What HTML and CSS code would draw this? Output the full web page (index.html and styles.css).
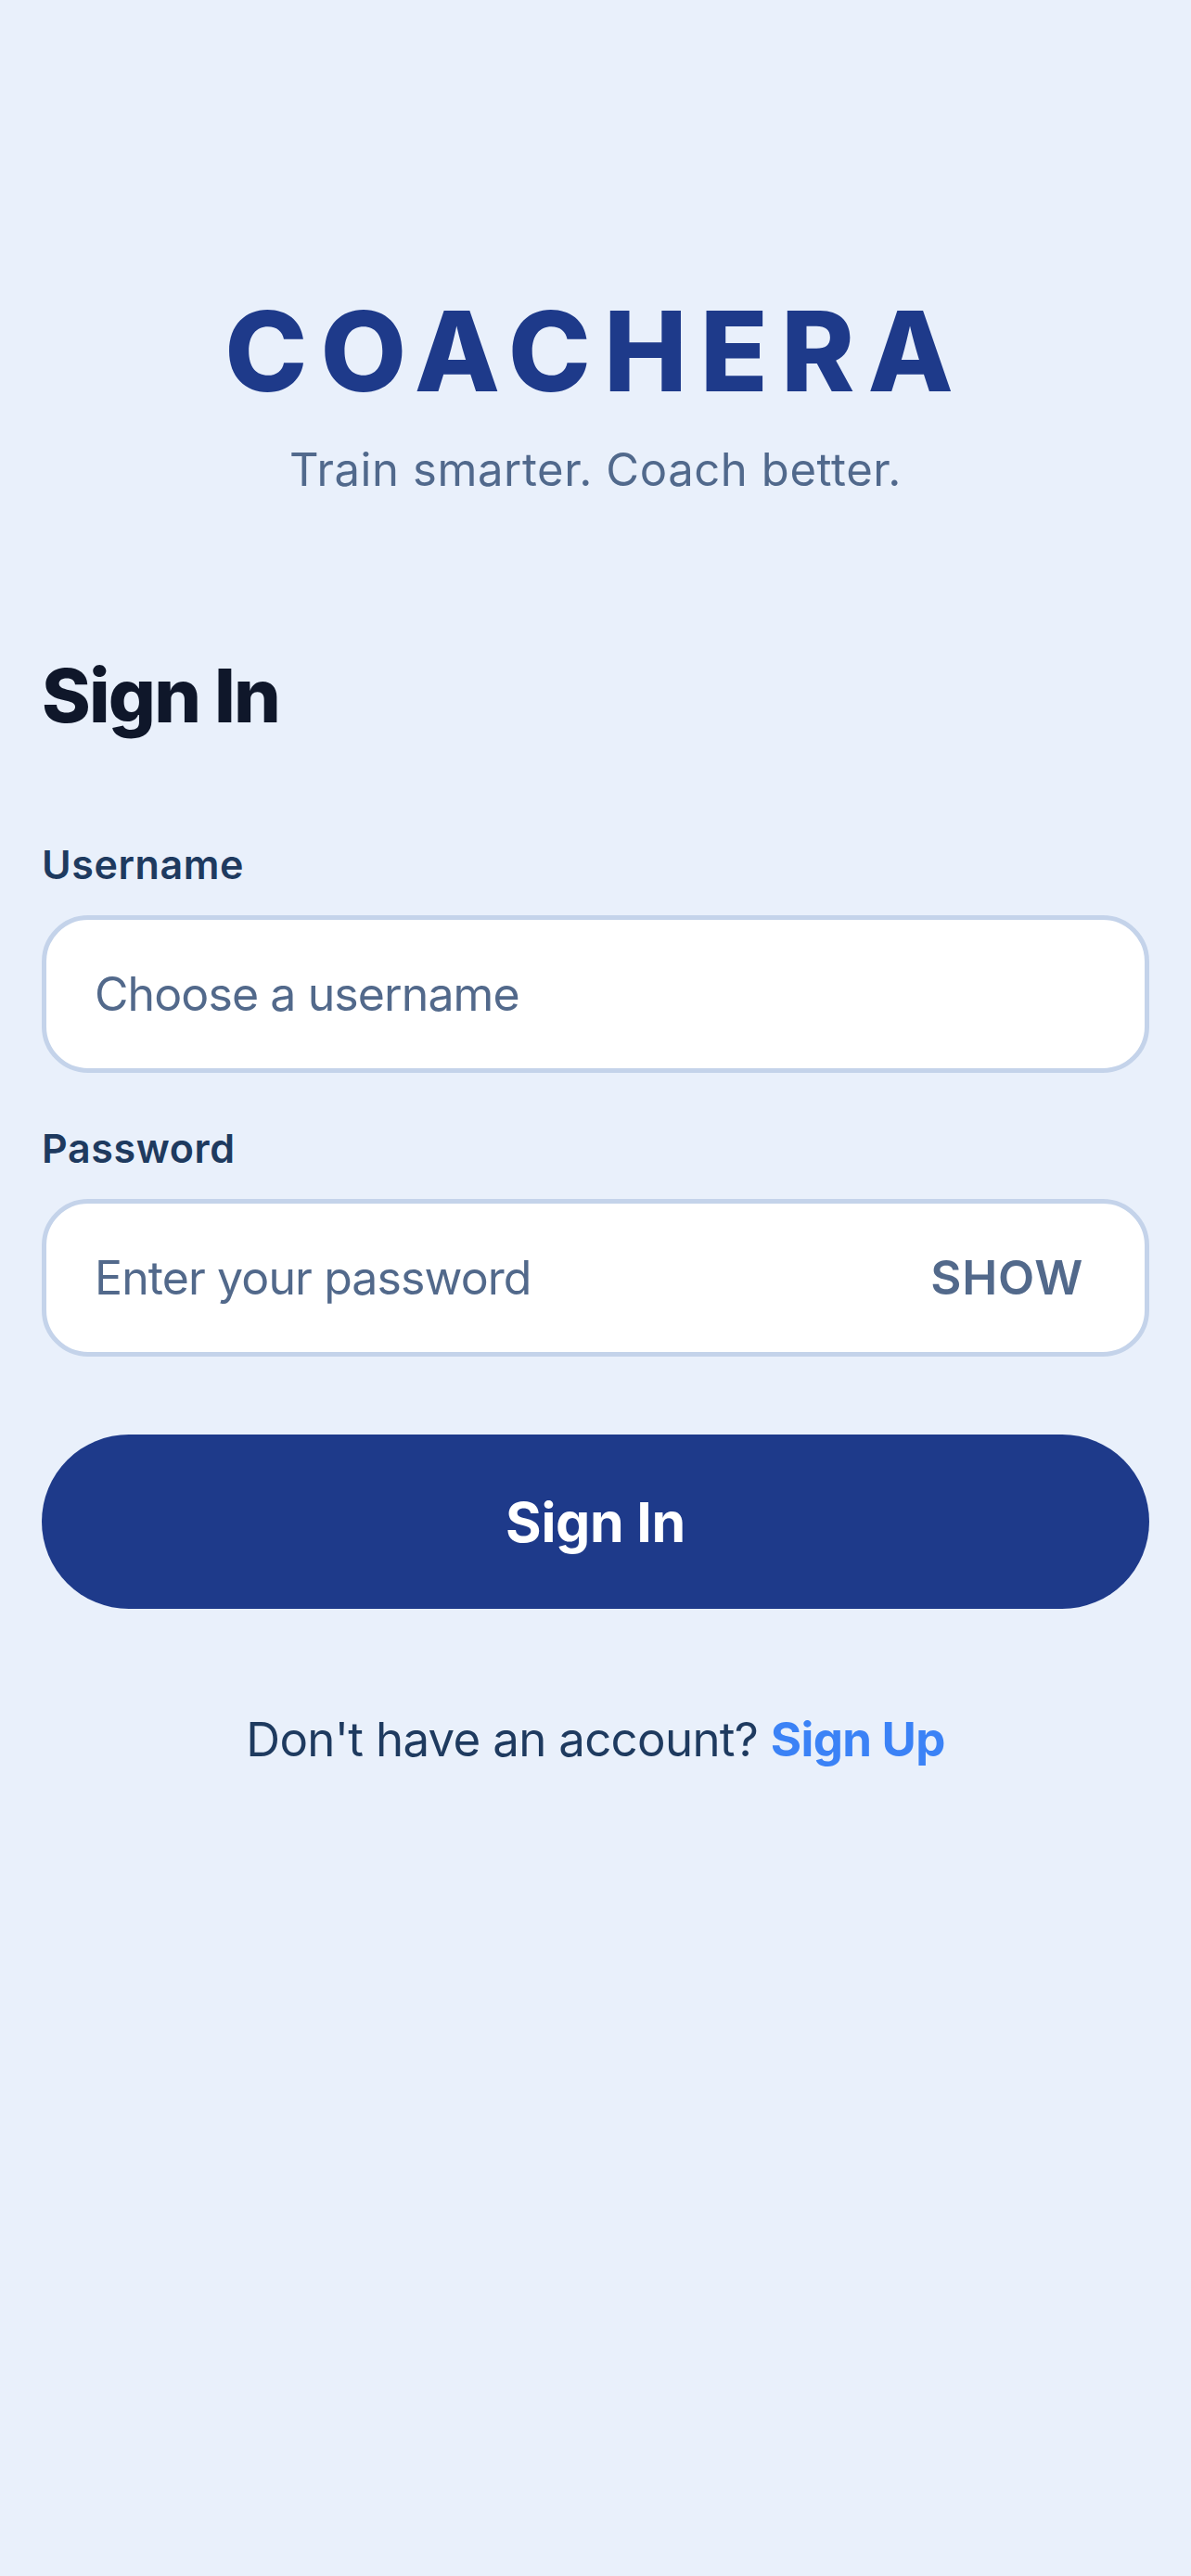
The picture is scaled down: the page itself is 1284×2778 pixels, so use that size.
FILE: index.html
```html
<!DOCTYPE html>
<html lang="en">
<head>
<meta charset="utf-8">
<title>Coachera – Sign In</title>
<link rel="stylesheet" href="styles.css">
</head>
<body>
<main class="screen">
  <header class="brand">
    <h1 class="brand-name">COACHERA</h1>
    <p class="brand-tagline">Train smarter. Coach better.</p>
  </header>

  <form class="form">
    <h2 class="form-title">Sign In</h2>

    <label class="field-label" for="username">Username</label>
    <div class="field">
      <input class="field-input" id="username" type="text" placeholder="Choose a username">
    </div>

    <label class="field-label field-label--second" for="password">Password</label>
    <div class="field field--password">
      <input class="field-input" id="password" type="password" placeholder="Enter your password">
      <button type="button" class="field-toggle">SHOW</button>
    </div>

    <button type="submit" class="primary-btn">Sign In</button>

    <p class="switch">Don't have an account? <a class="switch-link" href="#">Sign Up</a></p>
  </form>
</main>
</body>
</html>
```

FILE: styles.css
```css
* {
  box-sizing: border-box;
}

html, body {
  margin: 0;
  padding: 0;
  background: #e9f0fb;
}

body {
  font-family: "Inter", "Noto Sans", "Liberation Sans", sans-serif;
  color: #1e3a5f;
  min-height: 2778px;
}

.screen {
  padding: 319px 45px 0;
}

.brand {
  display: flex;
  flex-direction: column;
  align-items: center;
}

.brand-name {
  margin: 0;
  font-size: 120px;
  line-height: 120px;
  font-weight: 800;
  letter-spacing: 14px;
  color: #1e3a8a;
}

.brand-tagline {
  margin: 39px 0 0;
  font-size: 49px;
  line-height: 58px;
  font-weight: 400;
  letter-spacing: 0.6px;
  color: #51698c;
}

.form {
  display: flex;
  flex-direction: column;
  margin-top: 166px;
}

.form-title {
  margin: 0;
  font-size: 80px;
  line-height: 96px;
  font-weight: 800;
  letter-spacing: -1.8px;
  color: #0f172a;
}

.field-label {
  margin-top: 109px;
  font-size: 43px;
  line-height: 50px;
  font-weight: 600;
  letter-spacing: 0.6px;
  color: #1e3a5f;
}

.field-label--second {
  margin-top: 56px;
}

.field {
  margin-top: 30px;
  height: 170px;
  display: flex;
  align-items: center;
  background: #ffffff;
  border: 5px solid #c4d3ea;
  border-radius: 50px;
  padding: 0 66px 0 52px;
}

.field-input {
  flex: 1;
  min-width: 0;
  border: 0;
  outline: 0;
  background: transparent;
  padding: 0;
  font: inherit;
  font-size: 50px;
  line-height: 62px;
  letter-spacing: -0.9px;
  color: #1e3a5f;
}

.field-input::placeholder {
  color: #52698b;
  opacity: 1;
}

.field-toggle {
  border: 0;
  background: transparent;
  padding: 0;
  font: inherit;
  font-size: 51px;
  line-height: 62px;
  font-weight: 600;
  letter-spacing: 0.8px;
  color: #52698b;
}

.primary-btn {
  margin-top: 84px;
  height: 188px;
  border: 0;
  border-radius: 94px;
  background: #1e3a8a;
  color: #ffffff;
  font: inherit;
  font-size: 59px;
  font-weight: 700;
  letter-spacing: -0.3px;
}

.switch {
  margin: 110px 0 0;
  text-align: center;
  font-size: 51px;
  line-height: 62px;
  letter-spacing: -0.7px;
  color: #1e3a5f;
}

.switch-link {
  color: #3b82f6;
  font-weight: 700;
  text-decoration: none;
}
```
